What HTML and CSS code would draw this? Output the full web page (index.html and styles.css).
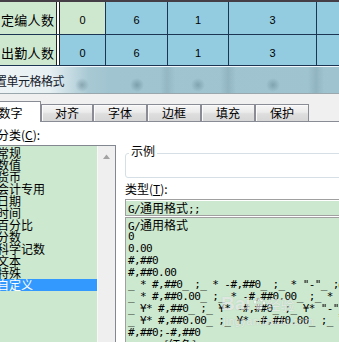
FILE: index.html
```html
<!DOCTYPE html>
<html lang="zh">
<head>
<meta charset="utf-8">
<link rel="stylesheet" href="styles.css">
</head>
<body>
<div class="sheet">
  <div class="row r1">
    <div class="cell label green">定编人数</div>
    <div class="sep"></div>
    <div class="cell c1 green">0</div>
    <div class="cell c2 blue">6</div>
    <div class="cell c3 blue">1</div>
    <div class="cell c4 blue">3</div>
    <div class="cell c5 blue"></div>
  </div>
  <div class="row r2">
    <div class="cell label green">出勤人数</div>
    <div class="sep"></div>
    <div class="cell c1 blue">0</div>
    <div class="cell c2 blue">6</div>
    <div class="cell c3 blue">1</div>
    <div class="cell c4 blue">3</div>
    <div class="cell c5 blue"></div>
  </div>
</div>
<div class="titlebar"><span class="title">置单元格格式</span></div>
<div class="dialog">
  <div class="tabs">
    <div class="tab active">数字</div>
    <div class="tab first">对齐</div>
    <div class="tab">字体</div>
    <div class="tab">边框</div>
    <div class="tab">填充</div>
    <div class="tab">保护</div>
  </div>
  <div class="panel">
    <div class="left">
      <div class="lbl cat-lbl">分类(<u>C</u>):</div>
      <div class="catbox">
        <ul class="cats">
          <li>常规</li>
          <li>数值</li>
          <li>货币</li>
          <li>会计专用</li>
          <li>日期</li>
          <li>时间</li>
          <li>百分比</li>
          <li>分数</li>
          <li>科学记数</li>
          <li>文本</li>
          <li>特殊</li>
          <li class="sel">自定义</li>
        </ul>
        <div class="scroll">
          <svg class="arrow" width="7" height="5" viewBox="0 0 7 5"><path d="M0 5 L3.5 0.5 L7 5 Z" fill="#a3a3a3"/></svg>
        </div>
      </div>
    </div>
    <div class="right">
      <div class="sample"><span class="legend">示例</span></div>
      <div class="lbl type-lbl">类型(<u>T</u>):</div>
      <div class="input"><span class="m">G/</span><span class="zh">通用格式</span><span class="m">;;</span></div>
      <ul class="fmts">
        <li><span class="m">G/</span><span class="zh">通用格式</span></li>
        <li>0</li>
        <li>0.00</li>
        <li>#,##0</li>
        <li>#,##0.00</li>
        <li>_ * #,##0_ ;_ * -#,##0_ ;_ * "-"_ ;@_ </li>
        <li>_ * #,##0.00_ ;_ * -#,##0.00_ ;_ * "-"??_ ;@_ </li>
        <li>_ ¥* #,##0_ ;_ ¥* -#,##0_ ;_ ¥* "-"_ ;@_ </li>
        <li>_ ¥* #,##0.00_ ;_ ¥* -#,##0.00_ ;_ ¥* "-"??_ ;@_ </li>
        <li>#,##0;-#,##0</li>
        <li>#,##0;<span class="zh">[红色]</span>-#,##0</li>
      </ul>
      <div class="wm" aria-hidden="true">
        <div class="wm-top"><span class="wm-bai">Bai</span><svg class="wm-paw" width="14" height="14" viewBox="0 0 14 14"><g fill="rgba(255,255,255,0.6)" stroke="rgba(140,140,140,0.3)" stroke-width="0.6"><ellipse cx="3" cy="5" rx="1.6" ry="2"/><ellipse cx="6" cy="2.5" rx="1.6" ry="2"/><ellipse cx="9.5" cy="2.8" rx="1.6" ry="2"/><ellipse cx="12" cy="6" rx="1.5" ry="1.9"/><path d="M7 6.5 C4.5 6.5 3 9.5 3.5 11.5 C4 13.5 10 13.5 10.5 11.5 C11 9.5 9.5 6.5 7 6.5 Z"/></g></svg><span class="wm-jy">经验</span></div>
        <div class="wm-url">jingyan.baidu.com</div>
      </div>
    </div>
  </div>
</div>
</body>
</html>
```

FILE: styles.css
```css
* { box-sizing: border-box; }
html, body {
  margin: 0;
  padding: 0;
}
body {
  width: 339px;
  height: 342px;
  overflow: hidden;
  background: #f0f0f0;
  font-family: "Noto Sans CJK SC", "Liberation Sans", sans-serif;
  color: #000;
}

/* spreadsheet */
.sheet {
  border-top: 2px solid #463e46;
  background: #1b3553;
}
.row {
  display: flex;
  border-bottom: 1px solid #1b3553;
}
.r1 { height: 33px; }
.r2 { height: 31px; }
.cell {
  display: flex;
  align-items: center;
  justify-content: center;
  border-right: 1px solid #1b3553;
  font-family: "Liberation Sans", sans-serif;
  font-size: 11px;
}
.r1 .cell { padding-top: 3px; }
.r2 .cell { padding-top: 5px; }
.green { background: #cde8cf; }
.blue { background: #93cce0; }
.cell.label {
  width: 56px;
  border-right: 0;
  justify-content: flex-start;
  padding-left: 1px;
  font-family: "Noto Sans CJK SC", sans-serif;
  font-size: 13px;
  letter-spacing: 0.3px;
  white-space: nowrap;
  overflow: hidden;
}
.sep {
  width: 4px;
  background: #ffffff;
  border-left: 1px solid #222;
  border-right: 1px solid #222;
}
.c1 { width: 46px; }
.c2 { width: 62px; }
.c3 { width: 61px; }
.c4 { width: 88px; }
.c5 { flex: 1; border-right: 0; }

/* blurred title bar */
.titlebar {
  height: 28px;
  border-top: 1px solid #f2f7f9;
  border-bottom: 1px solid #9aa7ad;
  display: flex;
  align-items: center;
  padding-top: 2px;
  background:
    radial-gradient(circle 7px at 82px 18px, rgba(70,105,118,0.4), rgba(70,105,118,0)),
    radial-gradient(circle 7px at 137px 18px, rgba(70,105,118,0.4), rgba(70,105,118,0)),
    radial-gradient(circle 7px at 198px 18px, rgba(70,105,118,0.35), rgba(70,105,118,0)),
    radial-gradient(circle 7px at 273px 18px, rgba(70,105,118,0.35), rgba(70,105,118,0)),
    linear-gradient(90deg,
      rgba(0,0,0,0) 0, rgba(0,0,0,0) 160px,
      rgba(60,90,105,0.12) 167px, rgba(0,0,0,0) 175px,
      rgba(0,0,0,0) 220px, rgba(60,90,105,0.14) 228px, rgba(0,0,0,0) 236px,
      rgba(0,0,0,0) 308px, rgba(60,90,105,0.14) 316px, rgba(0,0,0,0) 324px),
    linear-gradient(90deg, #eef4f6 0, #e6eff2 50px, #c9dde4 68px, #a8c9d4 88px, #a0c4d0 110px, #9fc3cf 100%);
}
.title {
  font-size: 12px;
  line-height: 14px;
  letter-spacing: -0.5px;
  margin-left: -5px;
  color: #15202a;
}

/* dialog */
.dialog {
  background: #f0f0f0;
}
.tabs {
  display: flex;
  align-items: flex-end;
  height: 28px;
  border-bottom: 1px solid #898c95;
}
.tab {
  width: 54px;
  height: 17px;
  border: 1px solid #898c95;
  border-bottom: 0;
  background: linear-gradient(#f6f6f6, #ebebeb 45%, #dedede 55%, #d6d6d6);
  box-shadow: inset 1px 1px 0 #fbfbfb;
  font-size: 12px;
  line-height: 16px;
  text-align: center;
  white-space: nowrap;
}
.tab.first { width: 52px; }
.tab.active {
  position: relative;
  z-index: 1;
  margin-left: -13px;
  height: 21px;
  margin-bottom: -1px;
  padding-top: 3px;
  padding-right: 7px;
  background: #ffffff;
  box-shadow: none;
}
.panel {
  background: #ffffff;
  height: 220px;
  display: flex;
  gap: 9px;
  overflow: hidden;
}
.lbl {
  font-size: 12px;
  line-height: 12px;
  white-space: nowrap;
}
.lbl u { text-underline-offset: 1px; }

/* category list */
.left {
  margin-left: -14px;
  width: 130px;
  flex: none;
  padding-top: 7px;
}
.cat-lbl { padding-left: 11px; }
.catbox {
  margin-top: 4px;
  border: 1px solid #828790;
  display: flex;
  height: 210px;
}
.cats {
  list-style: none;
  margin: 0;
  padding: 1px 0 0;
  flex: 1;
  background: #cce8cf;
}
.cats li {
  height: 12px;
  line-height: 12px;
  font-size: 12px;
  padding-left: 10px;
  white-space: nowrap;
}
.cats li.sel {
  background: #3399ff;
  color: #ffffff;
}
.scroll {
  width: 18px;
  flex: none;
  background: #efefef;
  border-left: 1px solid #f8f8f8;
  display: flex;
  justify-content: center;
  padding-top: 8px;
}
.arrow { display: block; }

/* right side */
.right {
  position: relative;
  flex: none;
  width: 240px;
}
.sample {
  margin-top: 31px;
  height: 25px;
  border: 1px solid #d5dfe5;
  border-radius: 3px;
}
.legend {
  display: block;
  width: max-content;
  margin: -9px 0 0 3px;
  padding: 0 2px;
  background: #ffffff;
  font-size: 12px;
  line-height: 12px;
}
.type-lbl { margin-top: 5px; }
.input {
  margin-top: 4px;
  height: 17px;
  border: 1px solid #a0a0a0;
  box-shadow: inset 0 1px 0 #ffffff;
  background: #cce8cf;
  padding-left: 2px;
  font-size: 11px;
  line-height: 16px;
  white-space: nowrap;
}
.m {
  font-family: "DejaVu Sans Mono", monospace;
  letter-spacing: -0.6px;
}
.zh {
  font-family: "Noto Sans CJK SC", sans-serif;
  font-size: 12px;
  letter-spacing: 0;
}
.fmts {
  list-style: none;
  margin: 1px 0 0;
  padding: 1px 0 0 2px;
  height: 130px;
  border: 1px solid #a0a0a0;
  border-right: 0;
  background: #cce8cf;
  overflow: hidden;
}
.fmts li {
  height: 12px;
  line-height: 12px;
  font-family: "DejaVu Sans Mono", monospace;
  font-size: 11px;
  letter-spacing: -0.6px;
  white-space: pre;
  color: #000;
}

/* watermark overlay */
.wm {
  position: absolute;
  left: 96px;
  top: 172px;
  color: rgba(255,255,255,0.6);
  text-shadow: 0 0 1px rgba(120,120,120,0.35);
  pointer-events: none;
}
.wm-top {
  display: flex;
  align-items: center;
  height: 20px;
}
.wm-bai {
  font-family: "Liberation Sans", sans-serif;
  font-weight: bold;
  font-size: 19px;
  line-height: 20px;
}
.wm-paw { margin: 0 1px; }
.wm-jy {
  font-size: 14px;
  line-height: 16px;
}
.wm-url {
  font-family: "Liberation Sans", sans-serif;
  font-size: 10px;
  line-height: 12px;
  margin-top: 2px;
  margin-left: 2px;
  letter-spacing: 0.6px;
}
```
